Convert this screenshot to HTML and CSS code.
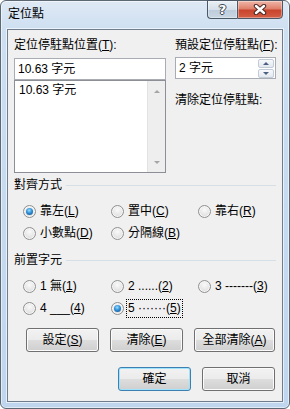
FILE: index.html
```html
<!DOCTYPE html>
<html lang="zh-Hant">
<head>
    <meta charset="UTF-8">
    <title>定位點</title>
    <link rel="stylesheet" href="styles.css">
</head>
<body>

    <div class="window">
        <div class="titlebar">
            <span class="title">定位點</span>
            <div class="caption">
                <div class="cap help"><span class="q">?</span></div>
                <div class="cap close">
                    <svg width="14" height="11" viewBox="0 0 14 11">
                        <path d="M3 2 L11 9 M11 2 L3 9" stroke="#4a2a24" stroke-width="4.4" stroke-linecap="round" fill="none"/>
                        <path d="M3 2 L11 9 M11 2 L3 9" stroke="#fff" stroke-width="2.4" stroke-linecap="round" fill="none"/>
                    </svg>
                </div>
            </div>
        </div>

        <div class="client">
            <!-- Vị trí + mặc định -->
            <div class="top">
                <div class="col">
                    <div class="lbl">定位停駐點位置(<u>T</u>):</div>
                    <div class="field">10.63 字元</div>
                    <div class="listbox">
                        <div class="item">10.63 字元</div>
                        <div class="scroll">
                            <span class="tri up"></span>
                            <span class="tri down"></span>
                        </div>
                    </div>
                </div>
                <div class="col">
                    <div class="lbl">預設定位停駐點(<u>F</u>):</div>
                    <div class="field spin">
                        <span class="spin-text">2 字元</span>
                        <div class="spin-btns">
                            <span class="sb"><span class="tri up blue"></span></span>
                            <span class="sb"><span class="tri down blue"></span></span>
                        </div>
                    </div>
                    <div class="clear-lbl">清除定位停駐點:</div>
                </div>
            </div>

            <!-- Canh lề -->
            <div class="group">
                <div class="group-head"><span>對齊方式</span><div class="line"></div></div>
                <div class="radios">
                    <div class="opt"><span class="dot on"></span><span>靠左(<u>L</u>)</span></div>
                    <div class="opt"><span class="dot"></span><span>置中(<u>C</u>)</span></div>
                    <div class="opt"><span class="dot"></span><span>靠右(<u>R</u>)</span></div>
                    <div class="opt"><span class="dot"></span><span>小數點(<u>D</u>)</span></div>
                    <div class="opt"><span class="dot"></span><span>分隔線(<u>B</u>)</span></div>
                </div>
            </div>

            <!-- Ký tự dẫn -->
            <div class="group second">
                <div class="group-head"><span>前置字元</span><div class="line"></div></div>
                <div class="radios">
                    <div class="opt"><span class="dot"></span><span>1 無(<u>1</u>)</span></div>
                    <div class="opt"><span class="dot"></span><span>2 ......(<u>2</u>)</span></div>
                    <div class="opt"><span class="dot"></span><span>3 -------(<u>3</u>)</span></div>
                    <div class="opt"><span class="dot"></span><span>4 ___(<u>4</u>)</span></div>
                    <div class="opt"><span class="dot on"></span><span class="focus">5 ·······(<u>5</u>)</span></div>
                </div>
            </div>

            <div class="btn-row first">
                <button class="btn">設定(<u>S</u>)</button>
                <button class="btn">清除(<u>E</u>)</button>
                <button class="btn wide">全部清除(<u>A</u>)</button>
            </div>

            <div class="btn-row last">
                <button class="btn default">確定</button>
                <button class="btn">取消</button>
            </div>
        </div>
    </div>

</body>
</html>
```

FILE: styles.css
```css
/* --- Hộp thoại kiểu Windows 7 --- */
body {
    margin: 0;
    font: 12px/15px "Liberation Sans", "Noto Sans CJK TC", sans-serif;
    color: #000;
    background: #fff;
}

.window {
    width: 290px;
    height: 409px;
    box-sizing: border-box;
    border: 1px solid #5d6875;
    border-radius: 6px;
    padding: 0 6px 6px 6px;
    background: linear-gradient(180deg, #dfe9f5 0%, #cddff1 30px, #bfd6ee 100%);
    box-shadow: inset 0 0 0 1px rgba(255,255,255,0.55);
    display: flex;
    flex-direction: column;
}

/* Thanh tiêu đề */
.titlebar {
    height: 28px;
    flex-shrink: 0;
    display: flex;
    align-items: flex-start;
}

.title {
    padding: 6px 0 0 1px;
}

.caption {
    margin-left: auto;
    margin-top: -1px;
    display: flex;
}

.cap {
    height: 19px;
    box-sizing: border-box;
    border: 1px solid #4c5866;
    display: flex;
    align-items: center;
    justify-content: center;
    box-shadow: inset 0 0 0 1px rgba(255,255,255,0.35);
}

.help {
    width: 30px;
    border-right: none;
    border-radius: 0 0 0 4px;
    background: linear-gradient(180deg, #e9eff5 0%, #d6e0ea 50%, #bccbdb 51%, #c9d6e4 100%);
}

.q {
    font: bold 13px/13px "DejaVu Sans", sans-serif;
    color: #fff;
    text-shadow: 1px 0 #3d4650, -1px 0 #3d4650, 0 1px #3d4650, 0 -1px #3d4650;
}

.close {
    width: 46px;
    border-radius: 0 0 4px 0;
    background: linear-gradient(180deg, #efb6a8 0%, #de7e68 48%, #c8432d 52%, #d45e46 100%);
}

/* Vùng nội dung */
.client {
    flex: 1;
    border: 1px solid #6f7d8c;
    background: #f0f0f0;
    box-shadow: 0 0 0 1px rgba(255,255,255,0.6);
    display: flex;
    flex-direction: column;
}

.top {
    display: grid;
    grid-template-columns: 152px 101px;
    column-gap: 9px;
    padding: 8px 6px 0 6px;
}

.lbl {
    height: 15px;
    margin-bottom: 5px;
    white-space: nowrap;
}

.field {
    height: 22px;
    box-sizing: border-box;
    border: 1px solid #a9acb2;
    background: #fff;
    padding: 3px 3px;
}

.listbox {
    height: 93px;
    box-sizing: border-box;
    border: 1px solid #8c9096;
    background: #fff;
    display: flex;
}

.item {
    flex: 1;
    padding: 2px 4px;
}

.scroll {
    width: 17px;
    background: #eeeeee;
    border-left: 1px solid #e2e2e2;
    display: flex;
    flex-direction: column;
    justify-content: space-between;
    align-items: center;
    padding: 9px 0 8px 0;
}

.tri {
    width: 0;
    height: 0;
    border-left: 3px solid transparent;
    border-right: 3px solid transparent;
}

.tri.up { border-bottom: 3px solid #a5a5a5; }
.tri.down { border-top: 3px solid #a5a5a5; }
.tri.up.blue { border-bottom-color: #4b5f80; }
.tri.down.blue { border-top-color: #4b5f80; }

.spin {
    margin-top: -1px;
    display: flex;
    padding: 0 1px 0 3px;
}

.spin-text {
    flex: 1;
    padding-top: 3px;
}

.spin-btns {
    width: 16px;
    display: flex;
    flex-direction: column;
    gap: 1px;
    padding-top: 1px;
}

.sb {
    height: 9px;
    box-sizing: border-box;
    border: 1px solid #c3cbd6;
    border-radius: 2px;
    background: linear-gradient(180deg, #f7f9fb, #e3e8ef);
    display: flex;
    align-items: center;
    justify-content: center;
}

.clear-lbl {
    margin-top: 14px;
    white-space: nowrap;
}

/* Nhóm tùy chọn */
.group {
    padding: 0 6px;
    margin-top: 5px;
}

.group.second {
    margin-top: 9px;
}

.group-head {
    display: flex;
    align-items: center;
    height: 15px;
}

.group-head .line {
    flex: 1;
    height: 1px;
    margin-left: 4px;
    background: #d5dfe5;
}

.radios {
    margin: 7px 0 0 9px;
    display: grid;
    grid-template-columns: 88px 87px 1fr;
    grid-auto-rows: 22px;
    align-items: center;
}

.opt {
    display: flex;
    align-items: center;
    gap: 4px;
    white-space: nowrap;
}

.dot {
    width: 13px;
    height: 13px;
    box-sizing: border-box;
    border-radius: 50%;
    border: 1px solid #8f9090;
    background: radial-gradient(circle at 50% 35%, #fafafa 0%, #e6e6e6 55%, #d2d2d2 100%);
    box-shadow: inset 0 0 0 1px #f6f6f6;
    display: flex;
    align-items: center;
    justify-content: center;
}

.dot.on::after {
    content: "";
    width: 7px;
    height: 7px;
    border-radius: 50%;
    background: radial-gradient(circle at 45% 35%, #9be0ff 0%, #2f8fd6 45%, #0d4a86 100%);
}

.focus {
    outline: 1px dotted #000;
    outline-offset: 1px;
}

/* Các nút */
.btn-row {
    display: flex;
    justify-content: flex-end;
    gap: 11px;
    padding-right: 7px;
}

.btn-row.first { margin-top: 9px; }
.btn-row.last { margin-top: 15px; }

.btn {
    width: 73px;
    height: 24px;
    font: inherit;
    color: #000;
    padding: 0;
    border: 1px solid #707070;
    border-radius: 3px;
    background: linear-gradient(180deg, #f2f2f2 0%, #ebebeb 50%, #dddddd 51%, #cfcfcf 100%);
    box-shadow: inset 0 0 0 1px #fbfbfb;
}

.btn.wide { width: 81px; }

.btn.default {
    border-color: #3c7fb1;
    box-shadow: inset 0 0 0 1px #9fe2fb;
}
```
